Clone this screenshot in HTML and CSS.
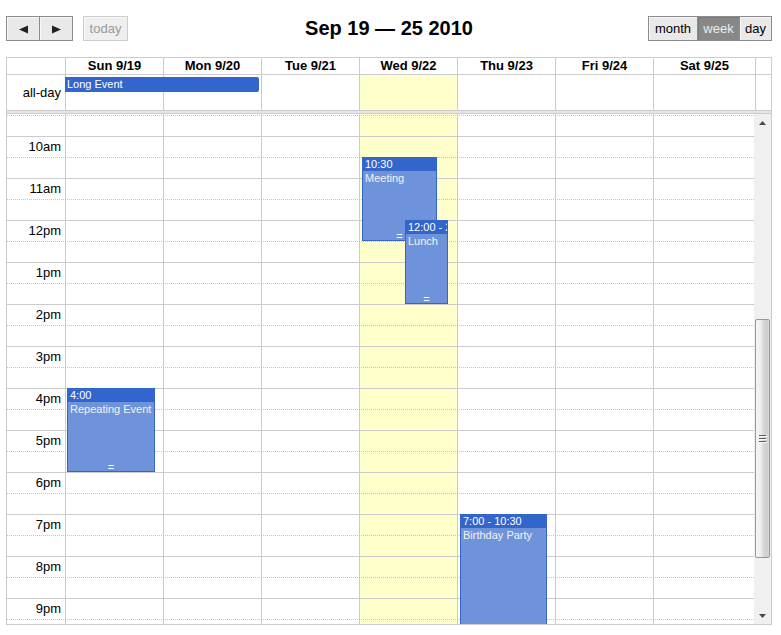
FILE: index.html
```html
<!DOCTYPE html>
<html>
<head>
<meta charset="utf-8">
<title>Calendar</title>
<link rel="stylesheet" href="styles.css">
</head>
<body>
<div class="cal">
  <div class="toolbar">
    <div class="tb-left">
      <div class="btn-group">
        <button class="btn btn-prev"><svg width="9" height="9" viewBox="0 0 9 9"><polygon points="0,4.5 9,0.5 9,8.5" fill="#222"/></svg></button>
        <button class="btn btn-next"><svg width="9" height="9" viewBox="0 0 9 9"><polygon points="9,4.5 0,0.5 0,8.5" fill="#222"/></svg></button>
      </div>
      <button class="btn btn-today">today</button>
    </div>
    <h2 class="title">Sep 19 — 25 2010</h2>
    <div class="tb-right">
      <div class="btn-group">
        <button class="btn btn-month">month</button><button class="btn btn-week active">week</button><button class="btn btn-day">day</button>
      </div>
    </div>
  </div>

  <div class="grid">
    <div class="head-row">
      <div class="axis"></div>
      <div class="cell">Sun 9/19</div>
      <div class="cell">Mon 9/20</div>
      <div class="cell">Tue 9/21</div>
      <div class="cell">Wed 9/22</div>
      <div class="cell">Thu 9/23</div>
      <div class="cell">Fri 9/24</div>
      <div class="cell cell-last">Sat 9/25</div>
      <div class="gutter"></div>
    </div>
    <div class="allday-row">
      <div class="axis">all-day</div>
      <div class="cell"></div>
      <div class="cell"></div>
      <div class="cell"></div>
      <div class="cell today"></div>
      <div class="cell"></div>
      <div class="cell"></div>
      <div class="cell cell-last"></div>
      <div class="gutter"></div>
      <div class="allday-event" style="left:58px;width:194px">Long Event</div>
    </div>
    <div class="divider"></div>
    <div class="body">
      <div class="time-grid">
        <div class="dc dc1">
          <div class="ev" style="top:274px;left:1px;width:88px;height:84px">
            <div class="ev-time">4:00</div>
            <div class="ev-title">Repeating Event</div>
            <div class="ev-handle">=</div>
          </div>
        </div>
        <div class="dc dc2"></div>
        <div class="dc dc3"></div>
        <div class="dc dc4 today">
          <div class="ev" style="top:43px;left:2px;width:75px;height:84px">
            <div class="ev-time">10:30</div>
            <div class="ev-title">Meeting</div>
            <div class="ev-handle">=</div>
          </div>
          <div class="ev ev-front" style="top:106px;left:45px;width:43px;height:84px">
            <div class="ev-time">12:00 - 2:00</div>
            <div class="ev-title">Lunch</div>
            <div class="ev-handle">=</div>
          </div>
        </div>
        <div class="dc dc5">
          <div class="ev" style="top:400px;left:2px;width:87px;height:147px">
            <div class="ev-time">7:00 - 10:30</div>
            <div class="ev-title">Birthday Party</div>
            <div class="ev-handle">=</div>
          </div>
        </div>
        <div class="dc dc6"></div>
        <div class="dc dc7"></div>
        <div class="slots">
          <div class="slot minor"></div>
          <div class="slot"><span>10am</span></div>
          <div class="slot minor"></div>
          <div class="slot"><span>11am</span></div>
          <div class="slot minor"></div>
          <div class="slot"><span>12pm</span></div>
          <div class="slot minor"></div>
          <div class="slot"><span>1pm</span></div>
          <div class="slot minor"></div>
          <div class="slot"><span>2pm</span></div>
          <div class="slot minor"></div>
          <div class="slot"><span>3pm</span></div>
          <div class="slot minor"></div>
          <div class="slot"><span>4pm</span></div>
          <div class="slot minor"></div>
          <div class="slot"><span>5pm</span></div>
          <div class="slot minor"></div>
          <div class="slot"><span>6pm</span></div>
          <div class="slot minor"></div>
          <div class="slot"><span>7pm</span></div>
          <div class="slot minor"></div>
          <div class="slot"><span>8pm</span></div>
          <div class="slot minor"></div>
          <div class="slot"><span>9pm</span></div>
          <div class="slot minor"></div>
        </div>
      </div>
      <div class="scrollbar">
        <div class="sb-arrow"><svg width="7" height="4" viewBox="0 0 7 4"><polygon points="3.5,0 7,4 0,4" fill="#4a4a4a"/></svg></div>
        <div class="sb-track">
          <div class="sb-thumb">
            <svg width="8" height="8" viewBox="0 0 8 8">
              <rect x="0" y="0" width="7" height="1" fill="#5a5a5a"/>
              <rect x="1" y="1" width="7" height="1" fill="#fafafa"/>
              <rect x="0" y="3" width="7" height="1" fill="#5a5a5a"/>
              <rect x="1" y="4" width="7" height="1" fill="#fafafa"/>
              <rect x="0" y="6" width="7" height="1" fill="#5a5a5a"/>
              <rect x="1" y="7" width="7" height="1" fill="#fafafa"/>
            </svg>
          </div>
        </div>
        <div class="sb-arrow"><svg width="7" height="4" viewBox="0 0 7 4"><polygon points="0,0 7,0 3.5,4" fill="#4a4a4a"/></svg></div>
      </div>
    </div>
  </div>
</div>
</body>
</html>
```

FILE: styles.css
```css
* { box-sizing: border-box; }

body {
  margin: 0;
  background: #fff;
  color: #000;
  font-family: "Liberation Sans", Arial, sans-serif;
}

.cal {
  width: 766px;
  margin: 16px 0 0 6px;
  font-size: 13px;
}

/* toolbar */
.toolbar {
  display: grid;
  grid-template-columns: 1fr auto 1fr;
  align-items: center;
  height: 25px;
  margin-bottom: 16px;
}
.tb-left { display: flex; }
.tb-right { display: flex; justify-content: flex-end; }
.title {
  margin: 0;
  font-size: 20px;
  font-weight: bold;
  line-height: 25px;
}
.btn-group { display: flex; }
.btn {
  height: 25px;
  padding: 0;
  margin: 0;
  font: 13px "Liberation Sans", Arial, sans-serif;
  color: #000;
  background: #e9e9e9;
  border: 1px solid #8c8c8c;
  box-shadow: inset 1px 1px 0 #f8f8f8;
  display: flex;
  align-items: center;
  justify-content: center;
}
.btn-group .btn + .btn { border-left: none; }
.btn-prev { width: 34px; padding-top: 1px; }
.btn-next { width: 33px; padding-top: 1px; }
.btn-today {
  width: 45px;
  margin-left: 10px;
  color: #9a9a9a;
  background: #efefef;
  border-color: #cdcdcd;
}
.btn-month { width: 50px; }
.btn-week { width: 42px; }
.btn-day { width: 32px; }
.btn.active {
  background: #888;
  color: #ececec;
  box-shadow: inset 1px 1px 0 #7a7a7a;
}

/* grid */
.grid { border: 1px solid #ccc; }

.head-row,
.allday-row {
  display: flex;
  border-bottom: 1px solid #ccc;
}
.head-row { height: 17px; }
.allday-row { height: 36px; position: relative; }

.axis { width: 58px; flex: none; }
.cell { width: 98px; flex: none; border-left: 1px solid #ccc; }
.cell-last { width: 102px; }
.gutter { width: 16px; flex: none; border-left: 1px solid #ccc; }

.head-row .cell {
  font-weight: bold;
  text-align: center;
  line-height: 16px;
  white-space: nowrap;
}
.allday-row .axis {
  display: flex;
  align-items: center;
  justify-content: flex-end;
  padding-right: 4px;
}
.today { background: #ffffcc; }

.allday-event {
  position: absolute;
  top: 2px;
  height: 15px;
  line-height: 15px;
  padding-left: 2px;
  background: #3366cc;
  color: #fff;
  font-size: 11px;
  border-radius: 0 2px 2px 0;
  white-space: nowrap;
}

.divider {
  height: 3px;
  background: #e4e4e4;
  border-bottom: 1px solid #ccc;
}

.body {
  display: flex;
  height: 510px;
}

.time-grid {
  width: 747px;
  height: 510px;
  overflow: hidden;
  display: grid;
  grid-template-columns: 58px repeat(6, 98px) 101px;
  grid-template-rows: 1px 525px;
}

.dc {
  grid-row: 1 / 3;
  border-left: 1px solid #ccc;
  position: relative;
}
.dc1 { grid-column: 2; }
.dc2 { grid-column: 3; }
.dc3 { grid-column: 4; }
.dc4 { grid-column: 5; }
.dc5 { grid-column: 6; }
.dc6 { grid-column: 7; }
.dc7 { grid-column: 8; }

.slots {
  grid-row: 2;
  grid-column: 1 / -1;
  position: relative;
}
.slot {
  height: 21px;
  border-top: 1px solid #ccc;
}
.slot.minor { border-top: 1px dotted #c4c4c4; }
.slot span {
  display: block;
  width: 58px;
  padding-right: 4px;
  text-align: right;
  line-height: 20px;
}

/* events */
.ev {
  position: absolute;
  z-index: 1;
  border: 1px solid #3366cc;
  background: #6f93db;
  color: #fff;
  font-size: 11px;
  overflow: hidden;
}
.ev-front { z-index: 2; }
.ev-time {
  height: 13px;
  line-height: 13px;
  padding-left: 2px;
  background: #3366cc;
  white-space: nowrap;
}
.ev-title {
  padding: 0 2px;
  line-height: 14px;
  color: #f2f2f2;
  white-space: nowrap;
}
.ev-handle {
  position: absolute;
  left: 0;
  right: 0;
  bottom: 0;
  height: 8px;
  line-height: 8px;
  text-align: center;
  font-size: 11px;
  color: #fff;
}

/* fake scrollbar */
.scrollbar {
  width: 17px;
  flex: none;
  background: #f0f0f0;
  display: flex;
  flex-direction: column;
}
.sb-arrow {
  height: 17px;
  display: flex;
  align-items: center;
  justify-content: center;
}
.sb-track { flex: 1; }
.sb-thumb {
  margin: 188px 1px 0 1px;
  width: 15px;
  height: 239px;
  border: 1px solid #979797;
  border-radius: 2px;
  background: linear-gradient(to right, #f6f6f6 0%, #ececec 40%, #d9d9d9 55%, #cdcdcd 85%, #dadada 100%);
  display: flex;
  align-items: center;
  justify-content: center;
}
```
